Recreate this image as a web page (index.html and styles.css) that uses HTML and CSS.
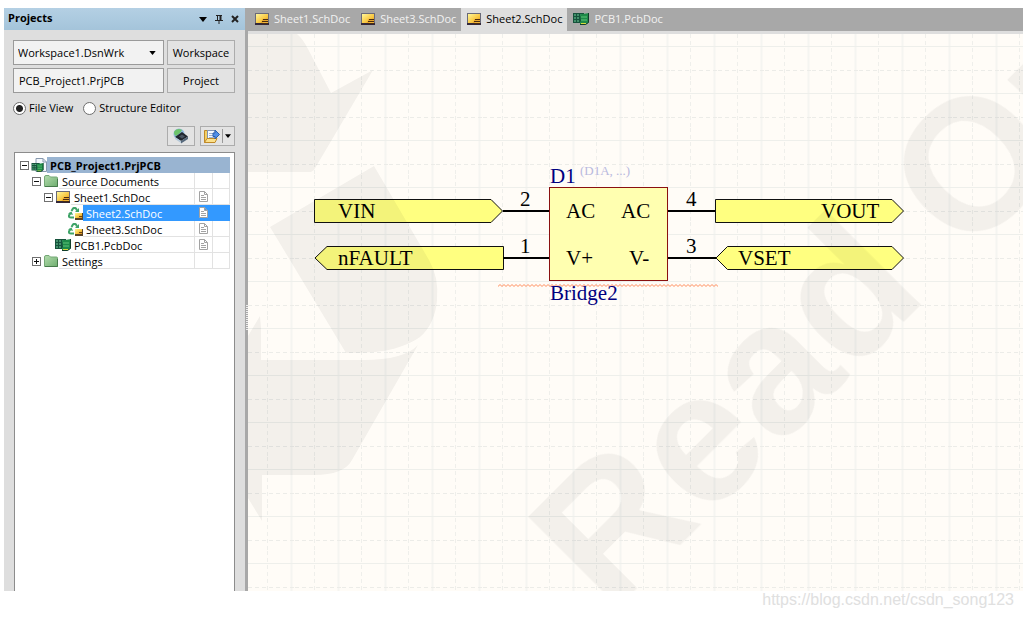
FILE: index.html
```html
<!DOCTYPE html>
<html lang="en">
<head>
<meta charset="utf-8">
<title>Sheet2.SchDoc</title>
<link rel="stylesheet" href="styles.css">
</head>
<body>
<svg class="defs" aria-hidden="true">
  <defs>
    <linearGradient id="gold" x1="0" y1="0" x2="1" y2="1">
      <stop offset="0" stop-color="#fff79a"/><stop offset=".6" stop-color="#f8c640"/><stop offset="1" stop-color="#d98a1c"/>
    </linearGradient>
    <linearGradient id="leaf" x1="0" y1="0" x2="1" y2="1">
      <stop offset="0" stop-color="#b4dcae"/><stop offset="1" stop-color="#6fae6f"/>
    </linearGradient>
    <symbol id="sheet" viewBox="0 0 14 12">
      <rect x="0" y="0" width="14" height="12" fill="#6a6a78"/>
      <rect x="1" y="1" width="12" height="9" fill="url(#gold)"/>
      <rect x="0" y="10" width="14" height="2" fill="#33283a"/>
      <path d="M6 10L7.500 6H13V10Z" fill="#e8a52c"/>
      <path d="M8 6.500h5M7 8.500h6M7 10.500h6" stroke="#4a2c10"/>
      <path d="M8 9.500h5" stroke="#f2b53a"/>
    </symbol>
    <symbol id="pcb" viewBox="0 0 16 12">
      <rect x="0" y="0" width="11" height="10" fill="#16523c"/>
      <path d="M1 2h2M4 2h2M7 2h2M1 5h2M4 5h2M1 8h2M4 8h2" stroke="#6fce9a"/>
      <path d="M7 1.500L16 0V9L12 12H7V9L8 8Z" fill="#1e8a48"/>
      <path d="M8 4h6M8 7h6" stroke="#5fc47a"/>
      <path d="M8 10.500h5" stroke="#d9dc3a"/>
      <path d="M15.500 0V9.500L12.500 11.500H7" stroke="#123d2a" fill="none"/>
    </symbol>
    <symbol id="folder" viewBox="0 0 14 12">
      <path d="M.5 2Q.5 .5 2 .5H5L6.500 2H12.500Q13.500 2 13.500 3V11.500H.5Z" fill="url(#leaf)" stroke="#75a876"/>
      <path d="M1 11.500H13.500V4" fill="none" stroke="#477a4b"/>
    </symbol>
    <symbol id="linked" viewBox="0 0 15 13">
      <path d="M3.500 4L5 1.500Q6.500 .2 8 1.500L9 3.500" fill="none" stroke="#3fa468" stroke-width="2"/>
      <path d="M7 5H11V1Z" fill="#3fa468"/>
      <path d="M2.500 6L1 8.500Q.5 10.500 3 10.500H6" fill="none" stroke="#3fa468" stroke-width="2"/>
      <path d="M0 6.500L3.500 4.500L5 8Z" fill="#3fa468"/>
      <rect x="6" y="5" width="9" height="8" fill="#fff"/>
      <rect x="7" y="6" width="8" height="7" fill="#5a4326"/>
      <rect x="7" y="6" width="7" height="5" fill="url(#gold)"/>
      <path d="M11 9.500h3" stroke="#6a4314"/>
    </symbol>
    <symbol id="doc" viewBox="0 0 9 11">
      <path d="M.5 .5H5.500L8.500 3.500V10.500H.5ZM5.500 .5V3.500H8.500" fill="#fff" stroke="#a2a2a2"/>
      <path d="M2 4.500h3M2 6.500h5M2 8.500h5" stroke="#a2a2a2"/>
    </symbol>
    <symbol id="plus" viewBox="0 0 9 9">
      <rect x=".5" y=".5" width="8" height="8" fill="#fff" stroke="#707070"/><path d="M2 4.500h5M4.500 2v5" stroke="#111"/>
    </symbol>
    <symbol id="minus" viewBox="0 0 9 9">
      <rect x=".5" y=".5" width="8" height="8" fill="#fff" stroke="#707070"/><path d="M2 4.500h5" stroke="#111"/>
    </symbol>
    <symbol id="caret" viewBox="0 0 8 5"><path d="M0 0H8L4 5Z" fill="currentColor"/></symbol>
  </defs>
</svg>

<div class="app">
  <aside class="panel">
    <header class="panel-head">
      <h1 class="panel-title">Projects</h1>
      <button class="head-btn" aria-label="Panel menu"><svg width="8" height="5"><use href="#caret"/></svg></button>
      <button class="head-btn" aria-label="Pin"><svg width="8" height="10" viewBox="0 0 8 10"><path d="M1 1.500H7M2.500 1V6M0 6.500H8M4 6V10" fill="none" stroke="#222"/><path d="M5.500 1V6" stroke="#222" stroke-width="2"/></svg></button>
      <button class="head-btn" aria-label="Close"><svg width="8" height="8" viewBox="0 0 8 8"><path d="M1 1L7 7M7 1L1 7" stroke="#222" stroke-width="2"/></svg></button>
    </header>
    <div class="controls">
      <div class="pick">
        <select class="field" aria-label="Workspace file"><option>Workspace1.DsnWrk</option></select>
        <svg class="pick-arrow" width="7" height="4"><use href="#caret"/></svg>
      </div>
      <button class="btn">Workspace</button>
      <input class="field" type="text" value="PCB_Project1.PrjPCB" aria-label="Project file">
      <button class="btn">Project</button>
    </div>
    <div class="views">
      <label class="view"><input class="radio" type="radio" name="view" checked>File View</label>
      <label class="view"><input class="radio" type="radio" name="view">Structure Editor</label>
    </div>
    <div class="tools">
      <button class="btn tool" aria-label="Refresh">
        <svg width="16" height="16" viewBox="0 0 16 16"><circle cx="6" cy="6" r="5.500" fill="#8fb8dc"/><path d="M1.500 3Q5 -.5 9 2L7 5L3 8Q0 6 1.500 3Z" fill="#6cc46a"/><path d="M2 9L9 4L15 8.500L8 13Z" fill="#20262e"/><path d="M2 9L8 13V15L2 11Z" fill="#b4c8d8"/><path d="M8 13L15 8.500V11L8 15.500Z" fill="#56697c"/><path d="M6 8.500L9 6.500L12 8.500L9 10.500Z" fill="#4b5663"/></svg>
      </button>
      <button class="btn tool tool-wide" aria-label="Open options">
        <svg width="16" height="16" viewBox="0 0 16 16"><path d="M.5 2.500H4L5 4H9V14.500H.5Z" fill="#f4cf62" stroke="#c08a28"/><path d="M3.500 2.500H11V12.500H3.500Z" fill="#f5f9ff" stroke="#7f94b5"/><path d="M5 5.500h4M5 7.500h4M5 9.500h5" stroke="#9db3d3"/><path d="M.5 14.500L3 10.500H13L11 14.500Z" fill="#fbe08a" stroke="#c08a28"/><path d="M9 5H11V2L15.500 6.500L11 11V8.500H9Z" fill="#4f8fe8" stroke="#2a5fae"/></svg>
        <span class="tool-sep"></span>
        <svg width="6" height="4"><use href="#caret"/></svg>
      </button>
    </div>
    <div class="tree" role="tree">
      <div class="row root" role="treeitem">
        <span class="toggle"><svg width="9" height="9"><use href="#minus"/></svg></span>
        <span class="icon"><svg width="16" height="14" viewBox="0 0 16 14"><path d="M5 .5H12L15.500 4V13.500H5Z" fill="#f3f7fc" stroke="#8798ad"/><path d="M12 .5V4H15.500" fill="none" stroke="#8798ad"/><svg x="0" y="5" width="13" height="9"><use href="#pcb"/></svg></svg></span>
        <span class="name">PCB_Project1.PrjPCB</span>
      </div>
      <div class="row l1" role="treeitem">
        <span class="toggle"><svg width="9" height="9"><use href="#minus"/></svg></span>
        <span class="icon"><svg width="14" height="12"><use href="#folder"/></svg></span>
        <span class="name">Source Documents</span><span class="cell"></span><span class="cell"></span>
      </div>
      <div class="row l2" role="treeitem">
        <span class="toggle"><svg width="9" height="9"><use href="#minus"/></svg></span>
        <span class="icon"><svg width="14" height="12"><use href="#sheet"/></svg></span>
        <span class="name">Sheet1.SchDoc</span><span class="cell"><svg width="9" height="11"><use href="#doc"/></svg></span><span class="cell"></span>
      </div>
      <div class="row l3 selected" role="treeitem" aria-selected="true">
        <span class="toggle"></span>
        <span class="icon"><svg width="15" height="13"><use href="#linked"/></svg></span>
        <span class="name">Sheet2.SchDoc</span><span class="cell"><svg width="9" height="11"><use href="#doc"/></svg></span><span class="cell"></span>
      </div>
      <div class="row l3" role="treeitem">
        <span class="toggle"></span>
        <span class="icon"><svg width="15" height="13"><use href="#linked"/></svg></span>
        <span class="name">Sheet3.SchDoc</span><span class="cell"><svg width="9" height="11"><use href="#doc"/></svg></span><span class="cell"></span>
      </div>
      <div class="row l2" role="treeitem">
        <span class="toggle"></span>
        <span class="icon"><svg width="16" height="12"><use href="#pcb"/></svg></span>
        <span class="name">PCB1.PcbDoc</span><span class="cell"><svg width="9" height="11"><use href="#doc"/></svg></span><span class="cell"></span>
      </div>
      <div class="row l1" role="treeitem">
        <span class="toggle"><svg width="9" height="9"><use href="#plus"/></svg></span>
        <span class="icon"><svg width="14" height="12"><use href="#folder"/></svg></span>
        <span class="name">Settings</span><span class="cell"></span><span class="cell"></span>
      </div>
    </div>
  </aside>

  <div class="splitter"><span class="grip"></span></div>

  <main class="editor">
    <nav class="tabs">
      <button class="tab"><svg width="14" height="12"><use href="#sheet"/></svg>Sheet1.SchDoc</button>
      <button class="tab"><svg width="14" height="12"><use href="#sheet"/></svg>Sheet3.SchDoc</button>
      <button class="tab active"><svg width="14" height="12"><use href="#sheet"/></svg>Sheet2.SchDoc</button>
      <button class="tab"><svg width="16" height="12"><use href="#pcb"/></svg>PCB1.PcbDoc</button>
    </nav>
    <div class="canvas">
      <svg class="schematic" width="100%" height="100%">
        <defs>
          <pattern id="grid" width="47" height="47" patternUnits="userSpaceOnUse">
            <path d="M43.500 0V47" stroke="#f5f5f1" stroke-width="2"/>
            <path d="M0 12.500H47" stroke="#eeefeb"/>
            <path d="M19.500 0V47" stroke="#efefeb" stroke-dasharray="4 3"/>
            <path d="M0 36.500H47" stroke="#ecece8" stroke-dasharray="4 3"/>
          </pattern>
          <pattern id="wave" x="250" y="250" width="4" height="4" patternUnits="userSpaceOnUse">
            <path d="M-1 1.500L0 2.500L2 .5L4 2.500L5 1.500" fill="none" stroke="#ff8a58"/>
          </pattern>
        </defs>
        <rect width="100%" height="100%" fill="url(#grid)"/>
        <g class="port">
          <path d="M66.500 165.500H243L254.500 177L243 188.500H66.500Z"/>
          <path d="M67 224L79 212.500H255.500V235.500H79Z"/>
          <path d="M467.500 165.500H644L655.500 177L644 188.500H467.500Z"/>
          <path d="M468 224L479.500 212.500H644L655.500 224L644 235.500H479.500Z"/>
        </g>
        <path class="wire" d="M255 177H302M255 224H302M419 177H467M419 224H468"/>
        <rect class="part" x="301.500" y="153.500" width="118" height="93"/>
        <rect x="250" y="250" width="220" height="4" fill="url(#wave)"/>
        <g class="label">
          <text x="90" y="184">VIN</text>
          <text x="90" y="231">nFAULT</text>
          <text x="573" y="184">VOUT</text>
          <text x="490" y="231">VSET</text>
          <text x="318" y="184">AC</text>
          <text x="373" y="184">AC</text>
          <text x="318" y="231">V+</text>
          <text x="381" y="231">V-</text>
          <text x="272" y="172">2</text>
          <text x="272" y="219">1</text>
          <text x="438" y="172">4</text>
          <text x="438" y="219">3</text>
        </g>
        <g class="label blue">
          <text x="302" y="149">D1</text>
          <text x="302" y="266">Bridge2</text>
        </g>
        <text class="alias" x="332" y="141">(D1A, ...)</text>
        <g class="watermark">
          <path d="M0 0H49Q55 5 60 15L83 59L125 36L66 136L63 138H0Z"/>
          <path d="M126 132L22 193L98 319C125 319 150 318 172 303Q187 290 189 266Q191 243 181 226Z"/>
          <path d="M0 302L12 282L13 294V326H110Q155 327 170 311L104 426Q96 441 66 441H14V487L0 464Z"/>
          <text x="362" y="582" transform="rotate(-45 362 582)">Read Only</text>
        </g>
      </svg>
    </div>
  </main>
</div>
<footer class="credit">https://blog.csdn.net/csdn_song123</footer>
</body>
</html>
```

FILE: styles.css
```css
* { box-sizing: border-box; }

body {
  margin: 0;
  min-height: 100vh;
  padding: 8px 0 0 4px;
  display: flex;
  flex-direction: column;
  background: #fff;
  color: #000;
  font: 11px/16px "Open Sans", "Noto Sans", sans-serif;
}

button, input, select { font: inherit; color: inherit; margin: 0; }
svg { display: block; flex: none; }
.defs { position: absolute; width: 0; height: 0; }

.app { flex: 1; display: flex; min-height: 400px; }

.panel {
  flex: none;
  width: 241px;
  display: flex;
  flex-direction: column;
  background: #dedede;
}
.panel-head {
  height: 22px;
  display: flex;
  align-items: center;
  padding: 0 2px 0 4px;
  background: linear-gradient(#b4d0e4, #a4c4da);
}
.panel-title { flex: 1; margin: 0; padding-bottom: 2px; font-size: 11px; font-weight: 700; }
.head-btn {
  width: 16px;
  height: 16px;
  padding: 0;
  border: 0;
  background: none;
  display: grid;
  place-items: center;
}

.controls {
  display: grid;
  grid-template-columns: 1fr 68px;
  gap: 3px;
  padding: 10px 10px 0 9px;
}
.pick { position: relative; display: flex; }
.pick-arrow { position: absolute; right: 8px; top: 11px; pointer-events: none; }
.field {
  width: 100%;
  min-width: 0;
  height: 25px;
  padding: 0 5px;
  border: 1px solid #9a9a9a;
  border-radius: 0;
  background: #f2f2f2;
  appearance: none;
}
select.field { padding-left: 4px; }
.btn {
  height: 25px;
  padding: 0;
  border: 1px solid #acacac;
  background: #e3e3e3;
  text-align: center;
}

.views { display: flex; gap: 10px; padding: 7px 9px 0; }
.view { display: flex; align-items: center; gap: 3px; }
.radio {
  appearance: none;
  width: 13px;
  height: 13px;
  border: 1px solid #6e6e6e;
  border-radius: 50%;
  background: #fff;
}
.radio:checked { background: radial-gradient(circle, #222 3px, #fff 4px); }

.tools { display: flex; justify-content: flex-end; gap: 5px; padding: 10px 10px 6px; }
.tool {
  width: 28px;
  height: 20px;
  display: flex;
  align-items: center;
  justify-content: center;
}
.tool-wide { width: 35px; gap: 2px; }
.tool-sep { width: 1px; height: 14px; background: #999; }

.tree {
  flex: 1;
  margin: 0 10px;
  padding: 4px;
  border: 1px solid #8c8c8c;
  border-bottom: 0;
  background: #fff;
}
.row { display: flex; height: 16px; }
.l1 { padding-left: 12px; }
.l2 { padding-left: 24px; }
.l3 { padding-left: 36px; }
.toggle { width: 12px; padding-left: 1px; display: flex; align-items: center; }
.icon { width: 16px; display: grid; place-items: center; }
.name {
  flex: 1;
  padding-left: 3px;
  border-bottom: 1px solid #e2e2e2;
  line-height: 18px;
  white-space: nowrap;
}
.cell {
  width: 18px;
  display: grid;
  place-items: center;
  border-left: 1px solid #e2e2e2;
  border-bottom: 1px solid #e2e2e2;
}
.cell:last-child { border-right: 1px solid #e2e2e2; }
.root .name { background: #99b4d1; border-color: #99b4d1; font-weight: 700; }
.selected .name, .selected .cell { background: #3399ff; border-color: #3399ff; color: #fff; }

.splitter {
  flex: none;
  width: 3px;
  display: flex;
  align-items: center;
  background: #a8a8a8;
}
.grip { width: 2px; height: 26px; margin: 36px 0 0 1px; background: repeating-linear-gradient(#eee 0 1px, #a8a8a8 1px 2px); }

.editor { flex: 1; min-width: 0; display: flex; flex-direction: column; }
.tabs {
  display: flex;
  height: 26px;
  padding-left: 1px;
  background: #a8a8a8;
  border-bottom: 3px solid #dedede;
}
.tab {
  display: flex;
  align-items: center;
  gap: 5px;
  padding: 0 5px 2px 6px;
  border: 0;
  background: none;
  color: #f2f2f2;
  white-space: nowrap;
}
.tab.active { background: #dedede; color: #000; }

.canvas { flex: 1; min-height: 0; position: relative; overflow: hidden; background: #fffcf7; }
.schematic { position: absolute; inset: 0; }
.port { fill: #ffff80; stroke: #111; }
.wire { stroke: #000; stroke-width: 2; }
.part { fill: #ffffb0; stroke: #8a1010; }
.label { font: 21px "Liberation Serif", serif; fill: #000; }
.blue { fill: #000080; }
.alias { font: 13px "Liberation Serif", serif; fill: #b9b9de; }
.watermark { fill: #000; opacity: 0.05; font: bold 185px "Liberation Sans", sans-serif; }

.credit {
  height: 27px;
  padding-right: 9px;
  text-align: right;
  font: 16px/18px "Liberation Sans", sans-serif;
  color: #e0e0e0;
}
```
